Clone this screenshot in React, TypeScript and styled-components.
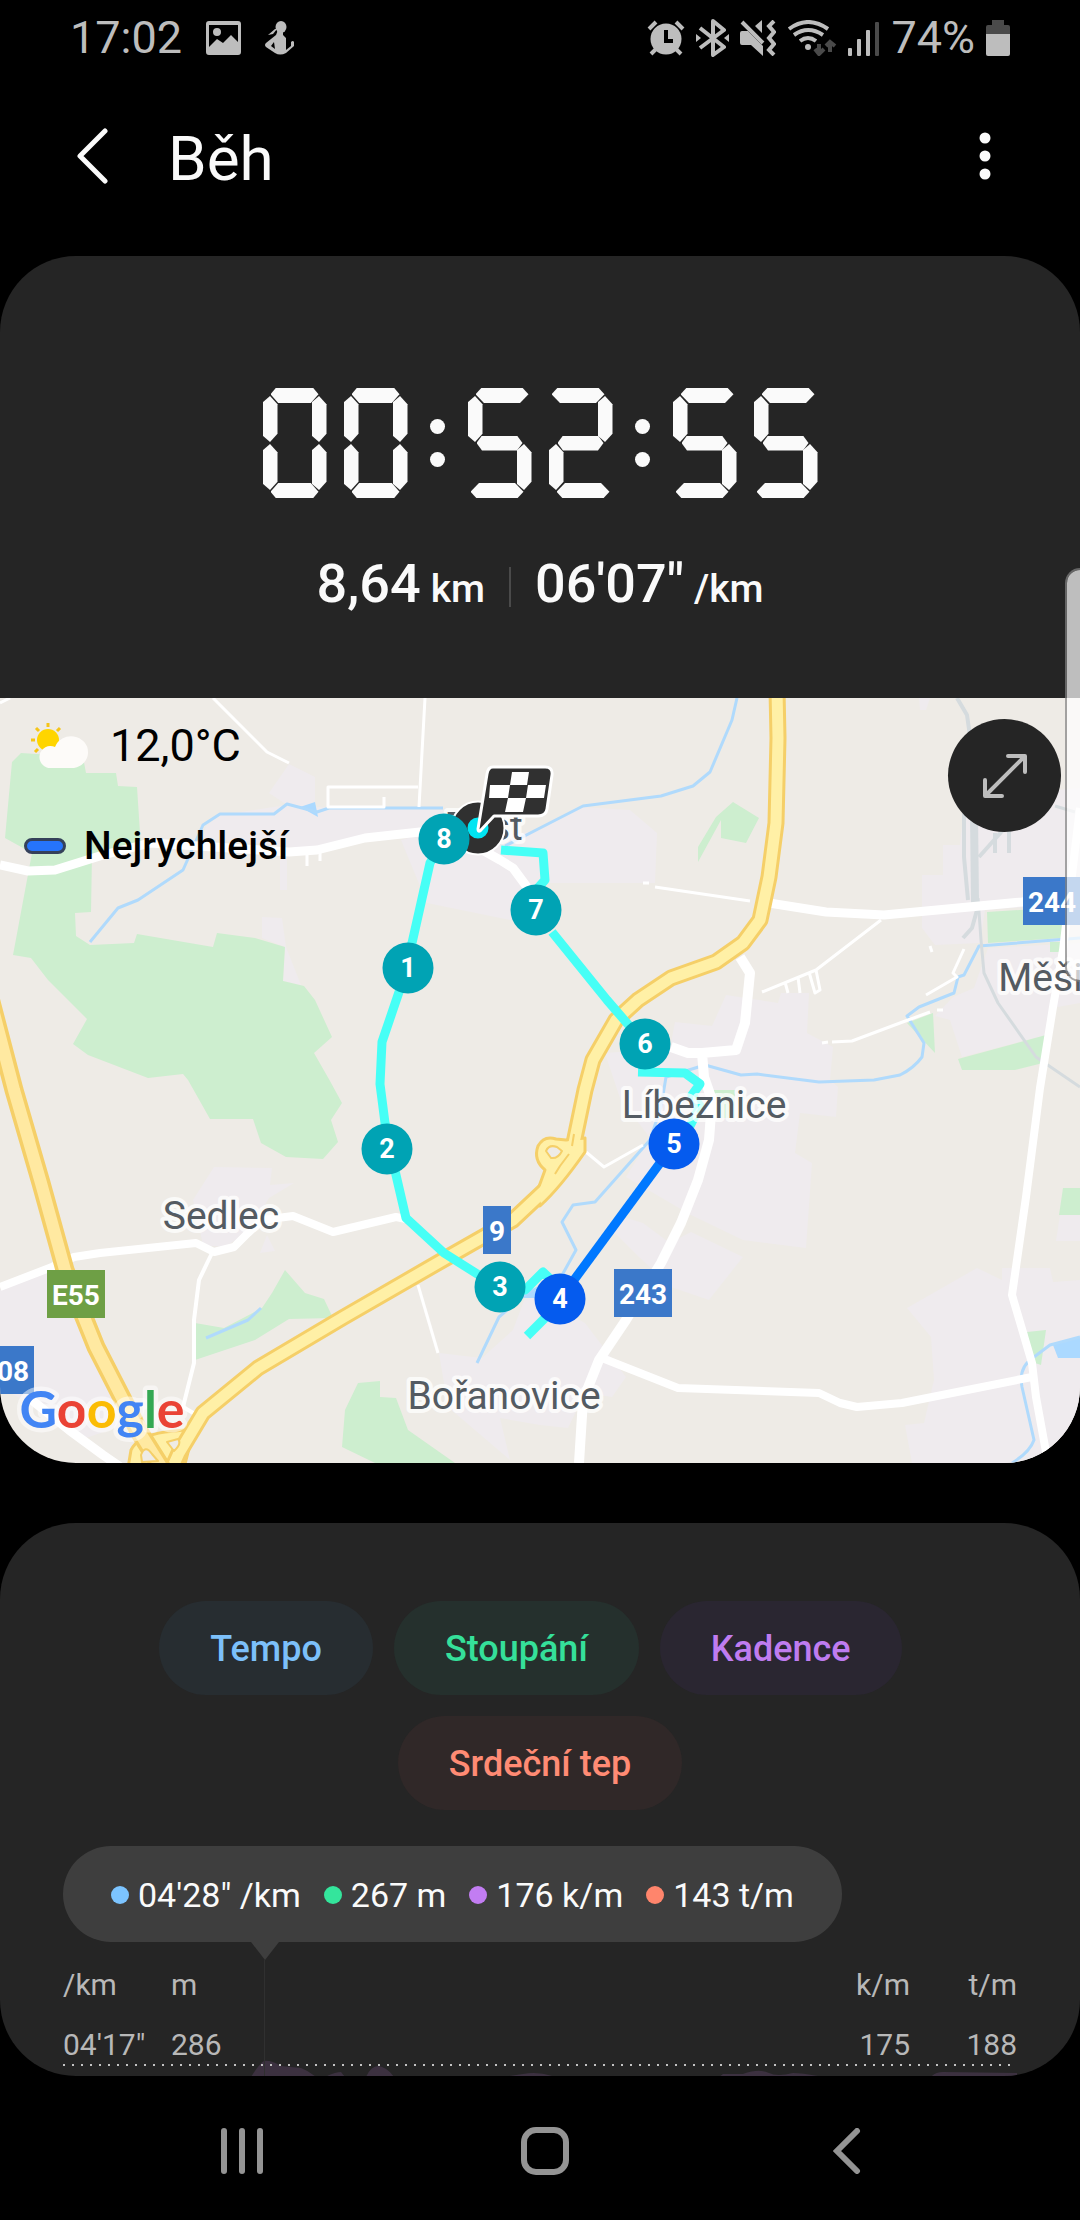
import React from 'react';
import styled, { createGlobalStyle } from 'styled-components';

const GlobalStyle = createGlobalStyle`
  *, *::before, *::after { box-sizing: border-box; }
  body { margin: 0; background: #000; font-family: Roboto, "Noto Sans", sans-serif; }
  button { font: inherit; color: inherit; background: none; border: 0; padding: 0; cursor: pointer; }
  svg { display: block; flex: none; }
`;

const Screen = styled.div`
  position: relative;
  min-height: 100vh;
  display: flex;
  flex-direction: column;
  overflow: hidden;
  background: #000;
  color: #fafafa;
`;

const StatusBar = styled.div`
  height: 76px;
  padding: 0 70px;
  display: flex;
  align-items: center;
  justify-content: space-between;
  color: #bdbdbd;
  font-size: 45px;
  line-height: 76px;
`;

const StatusGroup = styled.div<{ $gap: number }>`
  display: flex;
  align-items: center;
  gap: ${(p) => p.$gap}px;
`;

const AppBar = styled.header`
  height: 180px;
  padding: 0 67px 20px 64px;
  display: flex;
  align-items: center;
`;

const IconButton = styled.button`
  width: 56px;
  height: 72px;
  display: grid;
  place-items: center;
`;

const Title = styled.h1`
  flex: 1;
  margin: 0;
  padding: 6px 0 0 48px;
  font-size: 62px;
  line-height: 72px;
  font-weight: 400;
`;

const Card = styled.section`
  border-radius: 76px;
  background: #252525;
  overflow: hidden;
`;

const Summary = styled.div`
  height: 442px;
  padding-top: 132px;
  display: flex;
  flex-direction: column;
  align-items: center;
  gap: 54px;
`;

const Clock = styled.time`
  display: flex;
  gap: 17px;
`;

const Digit = styled.span`
  width: 64px;
  height: 110px;
  display: grid;
`;

const Colon = styled.span`
  width: 26px;
  display: flex;
  flex-direction: column;
  align-items: center;
  justify-content: center;
  gap: 18px;
  &::before, &::after {
    content: "";
    width: 15px;
    height: 15px;
    border-radius: 50%;
    background: #fafafa;
  }
`;

const Bar = styled.span<{ $align: string; $open?: string }>`
  grid-area: 1 / 1;
  align-self: ${(p) => p.$align};
  width: ${(p) => (p.$open ? 53 : 48)}px;
  height: 15px;
  margin-left: ${(p) => (p.$open === 'left' ? 3 : 8)}px;
  background: #fafafa;
  clip-path: polygon(0 41%, 11% 0, 89% 0, 100% 41%, 84% 100%, 16% 100%);
  ${(p) => p.$align === 'center' && 'width: 46px; margin-left: 9px; clip-path: polygon(0 50%, 12% 0, 88% 0, 100% 50%, 88% 100%, 12% 100%);'}
  ${(p) => p.$align === 'end' && 'clip-path: polygon(0 59%, 11% 100%, 89% 100%, 100% 59%, 84% 0, 16% 0);'}
`;

const Post = styled.span<{ $v: string; $h: string }>`
  grid-area: 1 / 1;
  align-self: ${(p) => p.$v};
  justify-self: ${(p) => p.$h};
  width: 15px;
  height: 46px;
  margin: 8px 0;
  background: #fafafa;
  clip-path: polygon(50% 0, 100% 18%, 100% 82%, 50% 100%, 0 86%, 0 14%);
`;

const Stats = styled.div`
  display: flex;
  align-items: center;
  gap: 24px;
`;

const Stat = styled.div`
  display: flex;
  align-items: baseline;
  gap: 10px;
  font-size: 54px;
  line-height: 64px;
  font-weight: 500;
  small { font-size: 39px; }
`;

const Divider = styled.span`
  width: 2px;
  height: 40px;
  background: #4a4a4a;
`;

const MapPanel = styled.div`
  position: relative;
  height: 765px;
  background: #eeebe6;
  color: #000;
`;

const MapDrawing = styled.svg`
  width: 100%;
  height: 100%;
  text { font-family: Roboto, "Noto Sans", sans-serif; text-anchor: middle; }
`;

const MapInfo = styled.div`
  position: absolute;
  left: 24px;
  top: 16px;
  display: grid;
  row-gap: 36px;
`;

const Weather = styled.div`
  display: flex;
  align-items: center;
  gap: 20px;
  padding-left: 4px;
  font-size: 45px;
  line-height: 64px;
`;

const Legend = styled.div`
  display: flex;
  align-items: center;
  gap: 18px;
  font-size: 39px;
  line-height: 64px;
  font-weight: 500;
`;

const LegendMark = styled.span`
  width: 42px;
  height: 16px;
  border: 3px solid #35415a;
  border-radius: 8px;
  background: #2674fb;
`;

const ExpandButton = styled.button`
  position: absolute;
  top: 21px;
  right: 19px;
  width: 113px;
  height: 113px;
  border-radius: 50%;
  background: #252525;
  display: grid;
  place-items: center;
`;

const EdgeHandle = styled.div`
  position: absolute;
  top: 568px;
  right: 0;
  width: 15px;
  height: 414px;
  border: 2px solid rgba(130, 130, 130, 0.7);
  border-right: 0;
  border-radius: 18px 0 0 18px;
  background: rgba(255, 255, 255, 0.7);
  background-clip: padding-box;
`;

const ChartCard = styled.section`
  flex: 1;
  margin-top: 60px;
  padding: 78px 63px 0;
  border-radius: 76px;
  background: #252525;
  overflow: hidden;
`;

const ChipRow = styled.div<{ $trail?: number }>`
  display: flex;
  justify-content: center;
  gap: 21px;
  margin-bottom: 21px;
  padding-right: ${(p) => p.$trail || 0}px;
`;

const Chip = styled.button<{ $bg: string; $fg: string }>`
  height: 94px;
  padding: 2px 51px 0;
  border-radius: 47px;
  background: ${(p) => p.$bg};
  color: ${(p) => p.$fg};
  font-size: 36px;
  font-weight: 500;
`;

const Chart = styled.div`
  position: relative;
  margin-top: 36px;
`;

const Guide = styled.span`
  position: absolute;
  left: 201px;
  top: 114px;
  bottom: 0;
  width: 1px;
  background: #303030;
`;

const Tooltip = styled.div`
  position: relative;
  width: max-content;
  height: 96px;
  padding: 2px 48px 0;
  border-radius: 48px;
  background: #3e3e3e;
  display: flex;
  align-items: center;
  gap: 23px;
  &::after {
    content: "";
    position: absolute;
    left: 188px;
    top: 96px;
    border: solid transparent;
    border-width: 18px 14px 0;
    border-top-color: #3e3e3e;
  }
`;

const Reading = styled.span<{ $dot: string }>`
  display: flex;
  align-items: center;
  gap: 9px;
  font-size: 34px;
  line-height: 40px;
  &::before {
    content: "";
    width: 18px;
    height: 18px;
    border-radius: 50%;
    background: ${(p) => p.$dot};
  }
`;

const Axis = styled.table`
  width: 100%;
  margin-top: 13px;
  border-collapse: collapse;
  color: #b8b8b8;
  font-size: 30px;
  line-height: 60px;
  th, td { padding: 0; font-weight: 400; text-align: left; }
  td { padding-top: 15px; line-height: 30px; }
  th:nth-child(1), th:nth-child(2) { width: 108px; }
  th:nth-child(n + 3), td:nth-child(n + 3) { text-align: right; }
  th:nth-child(4) { width: 107px; }
`;

const Area = styled.svg`
  width: 100%;
  height: 16px;
`;

const NavBar = styled.nav`
  height: 144px;
  padding: 5px 205px 0 214px;
  display: flex;
  align-items: center;
  justify-content: space-between;
`;

type Seg = [string, string, string?];

const digitSegments: Record<string, { bars: [string, string?][]; posts: Seg[] }> = {
  '0': { bars: [['start'], ['end']], posts: [['start', 'start'], ['start', 'end'], ['end', 'start'], ['end', 'end']] },
  '2': { bars: [['start', 'left'], ['center'], ['end', 'right']], posts: [['start', 'end'], ['end', 'start']] },
  '5': { bars: [['start', 'right'], ['center'], ['end', 'left']], posts: [['start', 'start'], ['end', 'end']] },
};

function SegmentClock({ value }: { value: string }) {
  return (
    <Clock role="img" aria-label={value}>
      {value.split('').map((c, i) =>
        c === ':' ? (
          <Colon key={i} />
        ) : (
          <Digit key={i}>
            {digitSegments[c].bars.map(([align, open]) => (
              <Bar key={align} $align={align} $open={open} />
            ))}
            {digitSegments[c].posts.map(([v, h]) => (
              <Post key={v + h} $v={v} $h={h} />
            ))}
          </Digit>
        ),
      )}
    </Clock>
  );
}

const greens = [
  '12,64 21,55 83,59 86,75 116,75 118,88 137,89 141,150 92,156 91,214 75,215 76,238 90,247 134,245 137,236 213,249 217,235 255,240 285,249 283,283 304,288 315,302 332,339 314,355 330,383 342,405 331,422 338,444 323,461 286,459 261,445 253,421 210,421 188,382 183,376 148,380 88,357 73,346 87,321 48,282 31,260 13,257 32,155 5,140',
  '285,572 305,595 324,601 333,620 289,621 255,642 195,662 195,625 224,630 262,610 272,595',
  '358,685 380,683 380,699 396,700 408,732 455,765 375,765 342,749 345,712',
  '733,104 759,120 746,145 721,140 721,122 698,164 698,149 716,119',
  '987,214 1065,209 1062,240 988,245',
  '1050,244 1064,244 1064,254 1050,254',
  '907,325 933,315 935,355',
  '958,361 1046,337 1043,365 1015,372 962,372',
  '1063,490 1080,490 1080,517 1059,517',
  '1027,634 1046,632 1041,667 1032,664',
  '712,392 735,392 735,420 712,420',
];

const towns = [
  '269,95 289,66 315,79 315,109 443,112 443,130 365,140 317,152 203,140 206,128 220,117 287,107',
  '401,142 427,205 510,222 527,222 540,185 655,185 657,135 630,112 581,109 540,132 480,142 443,130',
  '262,219 282,220 286,249 301,287 283,283 285,249 262,240',
  '280,157 287,157 287,192 280,192',
  '0,592 50,571 62,590 85,640 110,690 130,725 80,742 20,700 0,690',
  '214,469 272,470 270,487 294,485 269,500 248,535 224,549 203,547 193,502',
  '267,537 260,555 275,553',
  '439,655 482,660 513,632 525,600 540,600 585,625 626,679 612,699 585,695 568,730 540,727 500,720 510,762 448,709',
  '605,355 670,350 675,324 712,328 726,297 778,305 781,295 809,295 807,335 833,349 830,382 838,389 836,419 800,415 795,455 812,465 806,550 743,542 691,517 626,479 650,440 620,400',
  '620,518 643,525 670,545 691,534 743,559 709,602 671,589 640,560 615,535',
  '907,610 977,570 1002,582 1002,570 1050,570 1053,584 1080,582 1080,765 912,765 905,727 924,725 934,682 931,639',
  '1060,517 1080,517 1080,543 1056,543',
  '943,147 960,147 965,100 1080,90 1080,205 985,212 980,245 935,247 922,230 922,177 943,177',
  '988,250 1080,245 1080,305 1052,310 1046,337 962,359 950,322 935,318 953,299 974,290',
  '919,0 930,0 926,12 920,12',
];

const streams = [
  'M90 244 118 210 138 202 183 172 203 127 220 116 274 116 287 106 317 114 329 110 443 110',
  'M206 640 248 622 261 610',
  'M737 0 732 22 710 74 693 88 661 98 583 108 540 130 505 148',
  'M1080 240 979 248 964 277 958 279 954 295 919 309 907 318 924 345 922 359Q914 370 900 377L874 382 819 384 757 376 741 377 705 367 666 379 661 409 650 442 595 504 573 507 562 524 576 552 561 579 527 595 499 619 477 665',
  'M1080 639 1050 647 1034 659 Q1018 669 1022 689 L1034 742 Q1030 754 1012 765',
];

const rails: [string, number][] = [
  ['M957 0 967 17 971 45 M964 110 964 159 968 202', 4],
  ['M974 115 975 205', 8],
  ['M978 200 981 242 984 275 998 305 1036 359 1080 389', 3],
  ['M977 212 972 230 963 240 M1003 132 979 159 M1009 130V155 M995 135V155', 4],
  ['M1055 108 1075 114', 3],
];

const roads: [string, number][] = [
  ['M0 5 10 0 M213 0 267 54 289 65 M425 0 419 109 M418 89 328 89 328 109 384 109 384 99 M307 168V155 M320 163V155', 3],
  ['M0 167 28 173 55 172 103 157 150 145 230 150 289 154 317 152 365 140 420 134 470 145 500 162 513 170 527 189', 9],
  ['M0 589 52 569 74 559 100 555 196 545 214 554 234 549 248 535 262 522 293 518 333 534 396 519 406 521', 8],
  ['M212 555 199 582 194 622 194 665 183 709 195 716', 4],
  ['M418 587 438 655', 3],
  ['M28 699 69 732 103 757 122 770', 9],
  ['M769 205 826 214 884 217 1022 204 1080 197', 9],
  ['M643 185H649 M655 189 750 203', 3],
  ['M881 222 816 272 762 294 M785 284 788 295 M798 279 800 295 M809 274 815 295 820 292 816 272', 3],
  ['M740 259 750 275 745 325 736 352 702 355 688 355 671 349 M702 355 704 379 712 402 709 442 698 482 681 525 661 565 626 622 599 662 583 702 579 765', 10],
  ['M602 660 678 690 819 695 840 705 857 709 902 705 1032 679', 8],
  ['M1080 110 1074 160 1063 252 1053 309 1040 390 1026 499 1012 597 1032 665 1036 699 1048 765', 8],
  ['M964 251 953 275 957 279 926 297 M930 248 932 254 M822 345 828 344 M832 344 852 343 908 322 930 314 M937 312H943', 3],
  ['M586 454 604 469 643 447', 3],
];

const highway = 'M777 -8 778 40 776 125 769 179 760 222 743 245 716 264 671 280 638 302 616 322 593 362 585 392 574 445 545 492 513 522 448 559 344 619 258 670 203 715 179 755 170 775';
const motorway = 'M-10 300 14 392 41 485 65 572 96 649 140 735 165 775';

const kilometres: [string, number, number][] = [
  ['1', 408, 270], ['2', 387, 451], ['3', 500, 589], ['4', 560, 601],
  ['5', 674, 446], ['6', 645, 346], ['7', 536, 212], ['8', 444, 141],
];

const places: [string, number, number][] = [
  ['Bašť', 484, 142], ['Sedlec', 221, 531], ['Líbeznice', 704, 420], ['Bořanovice', 504, 711], ['Měšice', 1061, 293],
];

const shields: [string, number, number, number, string][] = [
  ['244', 1023, 179, 58, '#3b78c9'], ['243', 614, 571, 58, '#3b78c9'], ['9', 483, 508, 28, '#3b78c9'],
  ['608', -24, 648, 58, '#3b78c9'], ['E55', 47, 572, 58, '#6e9f45'],
];

const googleLetters: [string, string][] = [
  ['G', '#4285f4'], ['o', '#ea4335'], ['o', '#fbbc05'], ['g', '#4285f4'], ['l', '#34a853'], ['e', '#ea4335'],
];

function RouteMap() {
  return (
    <MapDrawing viewBox="0 0 1080 765" preserveAspectRatio="xMidYMid slice" role="img" aria-label="Mapa trasy">
      {towns.map((p) => <polygon key={p} points={p} fill="#efebee" />)}
      {greens.map((p) => <polygon key={p} points={p} fill="#cdeecf" />)}
      <polygon points="300,109 315,104 318,119" fill="#abd9ff" />
      <polygon points="1053,647 1080,639 1080,660 1058,660" fill="#abd9ff" />
      <polygon points="523,600 529,590 545,594 540,600" fill="#abd9ff" />
      <g fill="none" strokeLinejoin="round">
        {streams.map((d) => <path key={d} d={d} stroke="#b0dafc" strokeWidth={3} />)}
        {rails.map(([d, w]) => <path key={d} d={d} stroke="#d5dbde" strokeWidth={w} />)}
        {roads.map(([d, w]) => <path key={d} d={d} stroke="#fff" strokeWidth={w} />)}
        <path d="M128 770 131 752Q138 738 165 734L194 731 184 770Z" fill="#fff0a6" stroke="#f5cf68" strokeWidth={3} />
        <path d={highway} stroke="#f5cf68" strokeWidth={17} />
        <path d="M585 440V454Q560 490 540 508L537 494 545 472Q533 462 538 448 544 437 556 441L566 442Z" fill="#fff0a6" stroke="#f5cf68" strokeWidth={3} />
        <path d={highway} stroke="#fff0a6" strokeWidth={11} />
        <path d="M546 453Q549 446 557 449L562 453Q558 461 551 460ZM574 436 572 448M569 456 560 468 555 476" fill="#eeebe6" stroke="#f5cf68" strokeWidth={2} />
        <path d={motorway} stroke="#f5cf68" strokeWidth={19} />
        <path d={motorway} stroke="#ffe9a1" strokeWidth={12} />
        <path d="M167 744 178 741Q182 746 174 753ZM141 757Q145 746 152 756L158 763 142 764Z" fill="#eeebe6" stroke="#f5cf68" strokeWidth={2} />
      </g>
      <g fill="none" stroke="#46fff6" strokeWidth={9} strokeLinejoin="round">
        <path d="M444 141 430 165 412 245 399 294 382 344 380 386 385 425 396 477 406 520 444 555 482 579 500 589 525 592 543 574 560 590" />
        <path d="M527 638 545 620 560 605" />
        <path d="M674 446 690 428 700 408 692 397 700 386 685 375 638 374 M645 346 607 302 552 234 M536 192 545 182 543 155 501 152" />
        <path d="M560 601 674 446" stroke="#0078ff" />
      </g>
      {places.map(([name, x, y]) => (
        <text key={name} x={x} y={y} fontSize={39} fill="#545b62" stroke="#fff" strokeOpacity={0.75} strokeWidth={8} strokeLinejoin="round" paintOrder="stroke">{name}</text>
      ))}
      {shields.map(([name, x, y, w, fill]) => (
        <g key={name}>
          <rect x={x} y={y} width={w} height={48} fill={fill} />
          <text x={x + w / 2} y={y + 35} fontSize={28} fontWeight={700} fill="#fff">{name}</text>
        </g>
      ))}
      <circle cx={478} cy={130} r={18} fill="#00e5f2" stroke="#fff" strokeWidth={19} />
      <circle cx={478} cy={130} r={18} fill="#00e5f2" stroke="#303030" strokeWidth={15} />
      {kilometres.map(([n, x, y]) => (
        <g key={n}>
          <circle cx={x} cy={y} r={25.5} fill={n === '4' || n === '5' ? '#055bee' : '#00a3b4'} />
          <text x={x} y={y + 9} fontSize={27} fontWeight={700} fill="#fff">{n}</text>
        </g>
      ))}
      <path d="M493 69H545Q553 69 552 77L547 111Q546 118 538 118H494L480 133Q478 134 478 131L487 76Q488 69 493 69Z" fill="#303030" stroke="#fff" strokeWidth={3} strokeLinejoin="round" />
      <path d="M512 74H529L527 87H510ZM490 87H510L508 100H489ZM528 87H546L544 100H526ZM508 100H526L523 114H505Z" fill="#fff" />
      <text x={102} y={730} fontSize={52} fontWeight={700} strokeOpacity={0.5} stroke="#fff" strokeWidth={9} strokeLinejoin="round" paintOrder="stroke" style={{ fontFamily: 'Lato, sans-serif' }}>
        {googleLetters.map(([c, fill], i) => <tspan key={i} fill={fill}>{c}</tspan>)}
      </text>
    </MapDrawing>
  );
}

function App() {
  return (
    <Screen>
      <GlobalStyle />
      <StatusBar>
        <StatusGroup $gap={24}>
          <span>17:02</span>
          <svg width="35" height="34" viewBox="0 0 35 34" fill="#bdbdbd">
            <path fillRule="evenodd" d="M3 0H32Q35 0 35 3V31Q35 34 32 34H3Q0 34 0 31V3Q0 0 3 0ZM3 4V26L11 18 17 22 25 14 32 21V4ZM11 7A4 4 0 1 1 11 15 4 4 0 1 1 11 7Z" />
          </svg>
          <svg width="30" height="34" viewBox="0 0 30 34" fill="#bdbdbd">
            <ellipse cx="16" cy="6" rx="5.500" ry="6" />
            <path d="M3 14 10 8H12L8 13ZM13 9H18V14L21 17V29L26 25V21Q28 19 29 21V25L21 32Q15 35 10 32L1 26Q-1 24 1 22L11 14Z" />
            <path d="M9 21 6 25 10 28Z" fill="#000" />
          </svg>
        </StatusGroup>
        <StatusGroup $gap={11}>
          <svg width="38" height="36" viewBox="0 0 38 36" fill="#bdbdbd">
            <circle cx="19" cy="19" r="15.500" />
            <path d="M2 9 9 2M36 9 29 2M4 34 9 29M34 34 29 29" stroke="#bdbdbd" strokeWidth="4" />
            <path d="M19 10V21H26" fill="none" stroke="#000" strokeWidth="4" />
          </svg>
          <svg width="33" height="38" viewBox="0 0 33 38" fill="none" stroke="#bdbdbd" strokeWidth="4" strokeLinejoin="round">
            <path d="M4 9 28 28 17 36V2L28 11 4 29" />
            <path d="M0 15V23L5 19ZM33 15V23L28 19Z" fill="#bdbdbd" stroke="none" />
          </svg>
          <svg width="36" height="36" viewBox="0 0 36 36" fill="#bdbdbd">
            <path d="M2 11H8L23 26V36L11 25H2Q0 25 0 23V13Q0 11 2 11ZM15 6 22 0V13Z" />
            <path d="M2 2 23 23M34 1 29 6 34 12 29 18 34 24 29 30 34 35" fill="none" stroke="#bdbdbd" strokeWidth="4" />
          </svg>
          <svg width="50" height="36" viewBox="0 0 50 36" fill="none" stroke="#bdbdbd" strokeWidth="4">
            <path d="M2 9Q21 -5 41 9M7 15Q21 5 36 15M13 21Q21 15 29 21" />
            <circle cx="21" cy="27" r="3" fill="#bdbdbd" stroke="none" />
            <path d="M32 24V33M28 29 32 34 37 29M43 32V23M39 26 43 22 48 26" stroke="#4a4a4a" />
          </svg>
          <svg width="32" height="36" viewBox="0 0 32 36" fill="#bdbdbd">
            <rect x="0" y="28" width="4" height="8" rx="1" />
            <rect x="9" y="19" width="4" height="17" rx="1" />
            <rect x="18" y="10" width="4" height="26" rx="1" />
            <rect x="27" y="2" width="4" height="34" rx="1" fill="#4a4a4a" />
          </svg>
          <span>74%</span>
          <svg width="24" height="36" viewBox="0 0 24 36">
            <path d="M6 0H18V5H22Q24 5 24 7V15H0V7Q0 5 2 5H6Z" fill="#4a4a4a" />
            <path d="M0 14H24V34Q24 36 22 36H2Q0 36 0 34Z" fill="#bdbdbd" />
          </svg>
        </StatusGroup>
      </StatusBar>

      <AppBar>
        <IconButton aria-label="Zpět">
          <svg width="32" height="56" viewBox="0 0 32 56" fill="none" stroke="#fafafa" strokeWidth="5" strokeLinecap="round" strokeLinejoin="round">
            <path d="M29 3 4 28 29 53" />
          </svg>
        </IconButton>
        <Title>Běh</Title>
        <IconButton aria-label="Další možnosti">
          <svg width="12" height="50" viewBox="0 0 12 50" fill="#fafafa">
            <circle cx="6" cy="7" r="5.500" />
            <circle cx="6" cy="25" r="5.500" />
            <circle cx="6" cy="43" r="5.500" />
          </svg>
        </IconButton>
      </AppBar>

      <Card>
        <Summary>
          <SegmentClock value="00:52:55" />
          <Stats>
            <Stat>8,64 <small>km</small></Stat>
            <Divider />
            <Stat>06'07" <small>/km</small></Stat>
          </Stats>
        </Summary>
        <MapPanel>
          <RouteMap />
          <MapInfo>
            <Weather>
              <svg width="62" height="48" viewBox="0 0 62 48">
                <path d="M20 1V5M8 6 11 9M32 6 29 9M3 18H7M7 30 10 27" stroke="#f5c518" strokeWidth="3" />
                <circle cx="20" cy="18" r="11" fill="#ffd500" />
                <path d="M23 46A11 11 0 1 1 27 25 17 16 0 1 1 46 46Z" fill="#fdfbf9" />
              </svg>
              <span>12,0°C</span>
            </Weather>
            <Legend>
              <LegendMark />
              <span>Nejrychlejší</span>
            </Legend>
          </MapInfo>
          <ExpandButton aria-label="Zvětšit mapu">
            <svg width="46" height="46" viewBox="0 0 46 46" fill="none" stroke="#bdbdbd" strokeWidth="4" strokeLinecap="round" strokeLinejoin="round">
              <path d="M4 42 42 4M26 3H43V19M3 27V43H20" />
            </svg>
          </ExpandButton>
        </MapPanel>
      </Card>

      <ChartCard>
        <ChipRow $trail={19}>
          <Chip $bg="#272d31" $fg="#7cc0fa">Tempo</Chip>
          <Chip $bg="#25302d" $fg="#35e09a">Stoupání</Chip>
          <Chip $bg="#2a2631" $fg="#bf7cf0">Kadence</Chip>
        </ChipRow>
        <ChipRow>
          <Chip $bg="#302828" $fg="#ff8b74">Srdeční tep</Chip>
        </ChipRow>
        <Chart>
          <Guide />
          <Tooltip>
            <Reading $dot="#7cc4ff">04'28" /km</Reading>
            <Reading $dot="#34e59c">267 m</Reading>
            <Reading $dot="#c27df2">176 k/m</Reading>
            <Reading $dot="#ff856c">143 t/m</Reading>
          </Tooltip>
          <Axis>
            <thead>
              <tr><th>/km</th><th>m</th><th>k/m</th><th>t/m</th></tr>
            </thead>
            <tbody>
              <tr><td>04'17"</td><td>286</td><td>175</td><td>188</td></tr>
            </tbody>
          </Axis>
          <Area viewBox="0 0 954 16" preserveAspectRatio="none">
            <path d="M188 17Q196 4 201 1 208 0 218 6L238 8Q246 11 253 17ZM262 17Q272 12 278 12L282 17ZM303 17Q308 6 315 6 324 7 331 17ZM440 17 460 14Q476 11 492 17ZM656 17 660 14 680 14Q696 8 706 13 714 17 730 13 740 13 760 17ZM868 17Q872 12 880 12L954 13V17Z" fill="#3c3140" />
            <path d="M0 5H954" stroke="#c4c4c4" strokeWidth="2" strokeDasharray="2 7" />
          </Area>
        </Chart>
      </ChartCard>

      <NavBar>
        <IconButton aria-label="Poslední aplikace">
          <svg width="42" height="46" viewBox="0 0 42 46" fill="#949494">
            <rect width="6" height="46" rx="3" />
            <rect x="18" width="6" height="46" rx="3" />
            <rect x="36" width="6" height="46" rx="3" />
          </svg>
        </IconButton>
        <IconButton aria-label="Domů">
          <svg width="48" height="48" viewBox="0 0 48 48" fill="none" stroke="#949494" strokeWidth="6">
            <rect x="3" y="3" width="42" height="42" rx="12" />
          </svg>
        </IconButton>
        <IconButton aria-label="Zpět v systému">
          <svg width="28" height="46" viewBox="0 0 28 46" fill="none" stroke="#949494" strokeWidth="6" strokeLinecap="round">
            <path d="M24 3 4 23 24 43" />
          </svg>
        </IconButton>
      </NavBar>
      <EdgeHandle />
    </Screen>
  );
}

export default App;
